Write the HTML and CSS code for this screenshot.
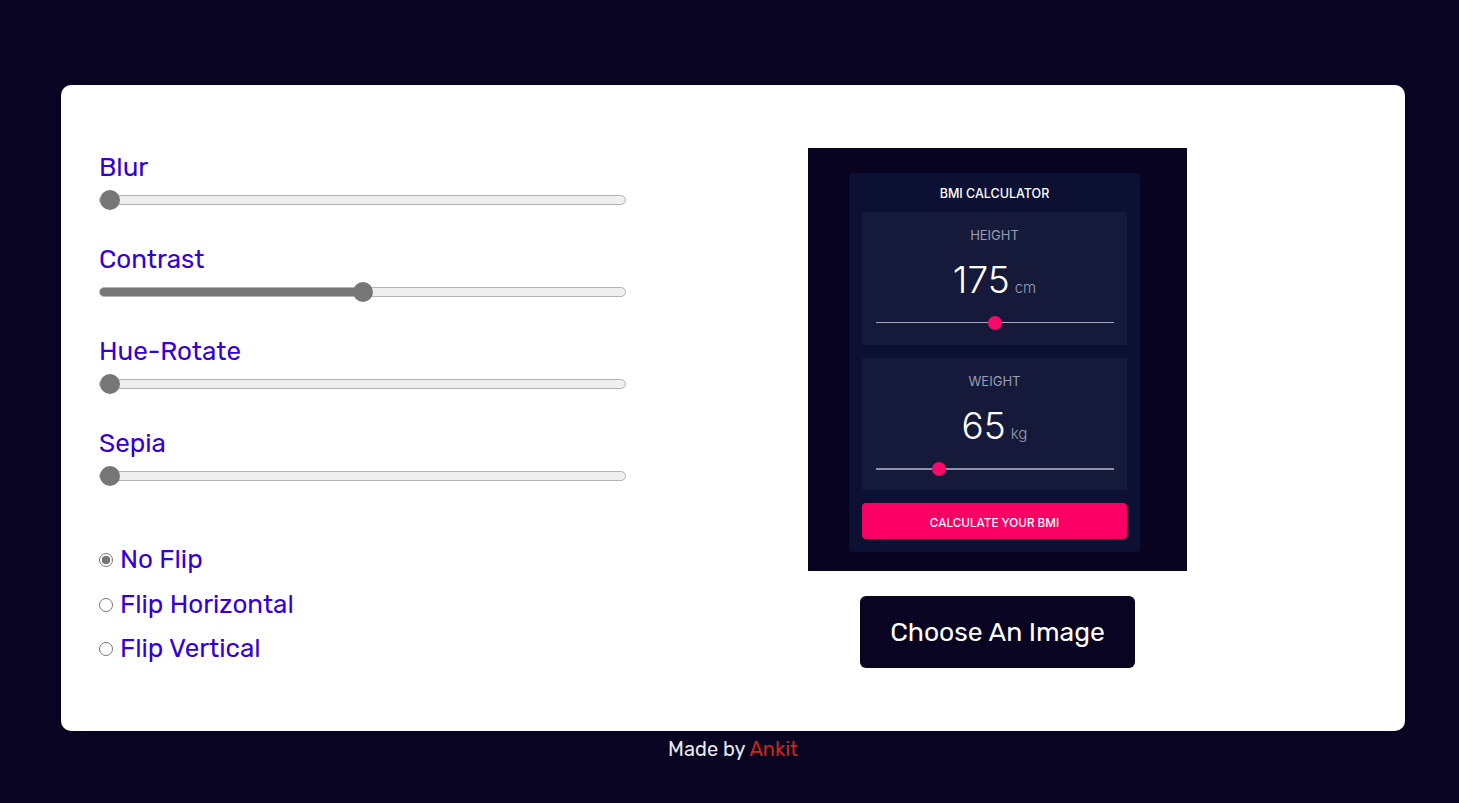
FILE: index.html
```html
<!DOCTYPE html>
<html lang="en">
<head>
<meta charset="utf-8">
<title>Image Editor</title>
<link rel="stylesheet" href="styles.css">
</head>
<body>
<main class="page">
  <section class="card">
    <div class="controls">
      <div class="filter">
        <label class="filter-label">Blur</label>
        <input class="slider" type="range" min="0" max="100" value="0">
      </div>
      <div class="filter">
        <label class="filter-label">Contrast</label>
        <input class="slider" type="range" min="0" max="200" value="100" style="--fill: 50%">
      </div>
      <div class="filter">
        <label class="filter-label">Hue-Rotate</label>
        <input class="slider" type="range" min="0" max="360" value="0">
      </div>
      <div class="filter">
        <label class="filter-label">Sepia</label>
        <input class="slider" type="range" min="0" max="100" value="0">
      </div>
      <div class="flips">
        <label class="flip"><input class="radio" type="radio" name="flip" checked><span>No Flip</span></label>
        <label class="flip"><input class="radio" type="radio" name="flip"><span>Flip Horizontal</span></label>
        <label class="flip"><input class="radio" type="radio" name="flip"><span>Flip Vertical</span></label>
      </div>
    </div>
    <div class="preview">
      <div class="shot">
        <div class="bmi">
          <div class="bmi-title">BMI CALCULATOR</div>
          <div class="bmi-box">
            <div class="bmi-name">HEIGHT</div>
            <div class="bmi-value">175<span class="bmi-unit">cm</span></div>
            <input class="bmi-range" type="range" min="100" max="250" value="175">
          </div>
          <div class="bmi-box">
            <div class="bmi-name">WEIGHT</div>
            <div class="bmi-value">65<span class="bmi-unit">kg</span></div>
            <input class="bmi-range bmi-range-thick" type="range" min="20" max="200" value="65">
          </div>
          <button class="bmi-btn">CALCULATE YOUR BMI</button>
        </div>
      </div>
      <button class="choose">Choose An Image</button>
    </div>
  </section>
  <footer class="credit">Made by <span class="author">Ankit</span></footer>
</main>
</body>
</html>
```
FILE: styles.css
```css
* { box-sizing: border-box; }
html, body { margin: 0; padding: 0; }
body {
  background: #080421;
  font-family: "Rubik", Inter, "Noto Sans", sans-serif;
  min-height: 803px;
}
.page {
  width: 1344px;
  margin-left: 61px;
  padding-top: 85px;
}
.card {
  background: #fff;
  border-radius: 10px;
  height: 646px;
  padding: 63px 36px 0 38px;
  display: grid;
  grid-template-columns: 527px 1fr;
  align-items: start;
}
.controls {
  display: flex;
  flex-direction: column;
  padding-top: 5px;
}
.filter {
  display: flex;
  flex-direction: column;
  margin-bottom: 35px;
}
.filter-label {
  font-size: 26px;
  line-height: 30px;
  color: #3500d4;
  margin-bottom: 7px;
}
.slider {
  -webkit-appearance: none;
  appearance: none;
  width: 527px;
  height: 10px;
  margin: 5px 0;
  border-radius: 5px;
  border: 1px solid #b3b3b3;
  background: linear-gradient(to right, #767676 0, #767676 var(--fill, 0%), #efefef var(--fill, 0%), #efefef 100%);
  outline: none;
}
.slider::-webkit-slider-thumb {
  -webkit-appearance: none;
  appearance: none;
  width: 20px;
  height: 20px;
  border-radius: 50%;
  background: #767676;
  border: none;
}
.flips {
  display: flex;
  flex-direction: column;
  gap: 14.5px;
  margin-top: 24px;
}
.flip {
  display: flex;
  align-items: center;
  font-size: 26px;
  line-height: 30px;
  color: #3500d4;
}
.radio {
  -webkit-appearance: none;
  appearance: none;
  width: 14px;
  height: 14px;
  margin: 0 7px 0 0;
  border: 1px solid #767676;
  border-radius: 50%;
  background: #fff;
}
.radio:checked {
  background: radial-gradient(circle, #767676 0, #767676 4px, #fff 4.6px);
}
.preview {
  display: flex;
  flex-direction: column;
  align-items: center;
}
.shot {
  width: 379px;
  height: 423px;
  background: #08041f;
  padding: 25px 0 0 41px;
  font-family: Inter, "Noto Sans", sans-serif;
}
.bmi {
  width: 291px;
  height: 379px;
  background: #0c1032;
  border-radius: 4px;
  padding: 11px 13px 13px;
  display: flex;
  flex-direction: column;
}
.bmi-title {
  color: #fff;
  font-size: 12.5px;
  font-weight: 500;
  line-height: 20px;
  text-align: center;
  margin-bottom: 8px;
}
.bmi-box {
  background: #151a3b;
  height: 133px;
  padding: 15px 14px 0;
  margin-bottom: 13px;
  display: flex;
  flex-direction: column;
  align-items: center;
}
.bmi-name {
  color: #9b9db2;
  font-size: 13px;
  line-height: 16px;
}
.bmi-value {
  color: #fff;
  font-size: 37px;
  font-weight: 300;
  line-height: 44px;
  margin-top: 15px;
}
.bmi-unit {
  color: #9b9db2;
  font-size: 15px;
  margin-left: 5px;
}
.bmi-range {
  -webkit-appearance: none;
  appearance: none;
  width: 238px;
  height: 1px;
  margin: 12px 0 0;
  background: #a6a7b8;
  outline: none;
}
.bmi-range-thick { height: 2px; background: #8f91aa; }
.bmi-range::-webkit-slider-thumb {
  -webkit-appearance: none;
  appearance: none;
  width: 14px;
  height: 14px;
  border-radius: 50%;
  background: #f70a68;
  border: none;
}
.bmi-btn {
  height: 36px;
  border: none;
  border-radius: 4px;
  background: #fb0064;
  color: #fff;
  font-family: Inter, "Noto Sans", sans-serif;
  font-size: 11.7px;
  font-weight: 500;
  padding: 3px 0 0;
}
.choose {
  margin-top: 25px;
  width: 275px;
  height: 72px;
  border: none;
  border-radius: 6px;
  background: #080421;
  color: #fff;
  font-family: "Rubik", Inter, "Noto Sans", sans-serif;
  font-size: 26.5px;
  padding: 0;
}
.credit {
  text-align: center;
  color: #e8e8ee;
  font-size: 20px;
  line-height: 36px;
}
.author { color: #c8271e; }
```
